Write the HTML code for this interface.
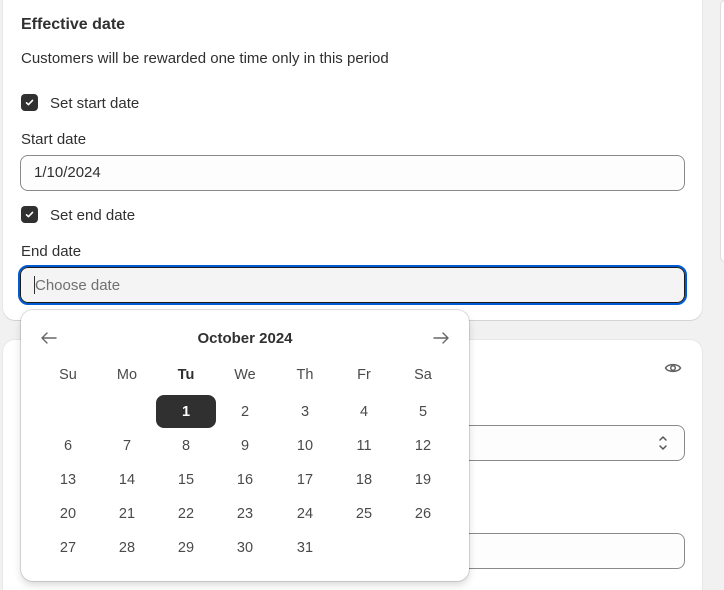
<!DOCTYPE html>
<html style="width:724px;height:590px;overflow:hidden"><head><style>
*{box-sizing:border-box;margin:0;padding:0}
body{width:724px;height:590px;background:#f1f1f1;font-family:"Liberation Sans",sans-serif;color:#303030;position:relative;overflow:hidden;font-size:14px}
.card{position:absolute;background:#fff;border-radius:12px;box-shadow:0 1px 0 rgba(0,0,0,.08),0 0 0 1px rgba(0,0,0,.04)}
.t{position:absolute;white-space:nowrap}
.cb{position:absolute;width:17px;height:17px;background:#303030;border-radius:4px}
.cb svg{position:absolute;left:3px;top:3px}
.inp{position:absolute;border:1px solid #8a8a8a;border-radius:8px;background:#fdfdfd}
.pop{position:absolute;left:21px;top:310px;width:448px;height:271px;background:#fff;border-radius:12px;box-shadow:0 4px 8px rgba(0,0,0,.15),0 0 0 1px rgba(0,0,0,.12)}
.c{position:absolute;width:40px;text-align:center;font-size:14.5px;color:#4a4a4a;transform:translateX(-20px)}
</style></head><body>
<div class="card" style="left:3px;top:-12px;width:699px;height:332px"></div>
<div class="card" style="left:3px;top:340px;width:699px;height:262px"></div>
<div style="position:absolute;left:720px;top:0;width:10px;height:262px;background:#fff;border:1px solid #ddd;border-radius:8px"></div>

<div class="t" style="left:21px;top:16px;font-weight:bold;font-size:16px">Effective date</div>
<div class="t" style="left:21px;top:50px;font-size:15px">Customers will be rewarded one time only in this period</div>
<div class="cb" style="left:21px;top:94px"><svg width="11" height="11" viewBox="0 0 11 11"><path d="M2.5 5.8 L4.5 7.6 L8.5 3.4" stroke="#fff" stroke-width="1.6" fill="none" stroke-linecap="round" stroke-linejoin="round"/></svg></div>
<div class="t" style="left:50px;top:95px;font-size:15px">Set start date</div>
<div class="t" style="left:21px;top:131px;font-size:15px">Start date</div>
<div class="inp" style="left:20px;top:155px;width:665px;height:36px"></div>
<div class="t" style="left:34px;top:164px;font-size:15px">1/10/2024</div>
<div class="cb" style="left:21px;top:206px"><svg width="11" height="11" viewBox="0 0 11 11"><path d="M2.5 5.8 L4.5 7.6 L8.5 3.4" stroke="#fff" stroke-width="1.6" fill="none" stroke-linecap="round" stroke-linejoin="round"/></svg></div>
<div class="t" style="left:50px;top:207px;font-size:15px">Set end date</div>
<div class="t" style="left:21px;top:243px;font-size:15px">End date</div>
<div style="position:absolute;left:18px;top:265px;width:669px;height:40px;border:2px solid #005bd3;border-radius:10px"></div>
<div style="position:absolute;left:20px;top:267px;width:665px;height:36px;border:1px solid #1a1a1a;border-radius:8px;background:#f4f4f4"></div>
<div style="position:absolute;left:34px;top:276px;width:1px;height:18px;background:#303030"></div>
<div class="t" style="left:35px;top:277px;font-size:15px;color:#707070">Choose date</div>

<svg style="position:absolute;left:664px;top:360px" width="18" height="16" viewBox="0 0 18 16"><path d="M1.5 8 C4 3.5 14 3.5 16.5 8 C14 12.5 4 12.5 1.5 8Z" fill="none" stroke="#616161" stroke-width="1.5"/><circle cx="9" cy="8" r="2.3" fill="none" stroke="#616161" stroke-width="1.5"/></svg>
<div class="inp" style="left:450px;top:425px;width:235px;height:36px;border-left:none;border-radius:0 8px 8px 0"></div>
<svg style="position:absolute;left:657px;top:434px" width="12" height="18" viewBox="0 0 12 18"><path d="M3 6 L6 3 L9 6 M3 12 L6 15 L9 12" fill="none" stroke="#555" stroke-width="1.5" stroke-linecap="round" stroke-linejoin="round"/></svg>
<div class="inp" style="left:450px;top:533px;width:235px;height:36px;border-left:none;border-radius:0 8px 8px 0"></div>

<div class="pop">
<svg style="position:absolute;left:19px;top:21px" width="18" height="14" viewBox="0 0 18 14"><path d="M16 7 H2 M7 2 L2 7 L7 12" fill="none" stroke="#666" stroke-width="1.4" stroke-linecap="round" stroke-linejoin="round"/></svg>
<svg style="position:absolute;left:411px;top:21px" width="18" height="14" viewBox="0 0 18 14"><path d="M2 7 H16 M11 2 L16 7 L11 12" fill="none" stroke="#666" stroke-width="1.4" stroke-linecap="round" stroke-linejoin="round"/></svg>
<div class="t" style="left:0;width:448px;text-align:center;top:20px;font-weight:bold;font-size:15px;color:#303030">October 2024</div>
<div style="position:absolute;left:135px;top:85px;width:60px;height:33px;background:#303030;border-radius:8px"></div>
</div>
<div id="g"></div>
<script>
var xs=[68,127,186,245,305,364,423],ys=[375,412,446,480,514,548],h=["Su","Mo","Tu","We","Th","Fr","Sa"],o="";
for(var i=0;i<7;i++)o+='<div class="c" style="left:'+xs[i]+'px;top:'+(ys[0]-8)+'px;'+(i==2?'font-weight:bold;color:#303030':'')+'">'+h[i]+'</div>';
for(var d=1;d<=31;d++){var p=d+1,r=Math.floor(p/7)+1,c=p%7;o+='<div class="c" style="left:'+xs[c]+'px;top:'+(ys[r]-8)+'px;'+(d==1?'color:#fff;font-weight:bold':'')+'">'+d+'</div>';}
document.getElementById("g").innerHTML=o;
</script>
</body></html>
